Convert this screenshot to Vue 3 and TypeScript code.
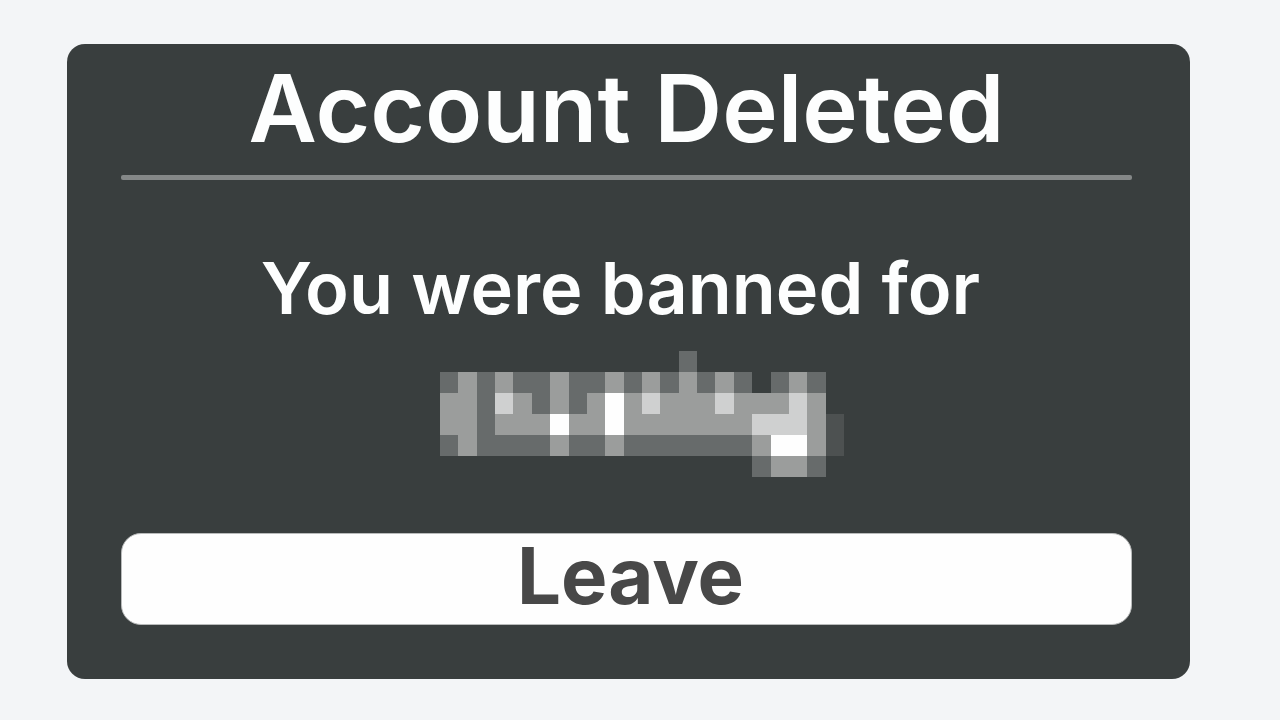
<script setup lang="ts">
const mosaic: string[] = [
  '.............b........',
  'bcbcbbcbbcbcbcbcb.bcb.',
  'ccbdcbcbcwcdcccdcccdc.',
  'ccbcccwccwcccccccdddca',
  'bcbbbbcbbcbbbbbbbcwwca',
  '.................bccb.',
]

const shades: Record<string, string> = {
  a: '#4d5151',
  b: '#676b6b',
  c: '#9b9d9c',
  d: '#cfd0d0',
  w: '#fefefe',
}

const cells = mosaic.flatMap((row, y) =>
  [...row].map((key, x) => ({ key, x, y })).filter((cell) => cell.key !== '.'),
)
</script>

<template>
  <main class="page">
    <section class="dialog" aria-labelledby="dialog-title">
      <h1 id="dialog-title" class="title">Account Deleted</h1>
      <hr class="rule" />
      <p class="message">You were banned for</p>
      <svg class="mosaic" viewBox="0 0 22 6" preserveAspectRatio="none" shape-rendering="crispEdges" aria-hidden="true">
        <rect v-for="c in cells" :key="`${c.x}-${c.y}`" :x="c.x" :y="c.y" width="1" height="1" :fill="shades[c.key]" />
      </svg>
      <button type="button" class="leave">Leave</button>
    </section>
  </main>
</template>

<style>
body {
  margin: 0;
  background: #f3f5f7;
}
</style>

<style scoped>
.page {
  box-sizing: border-box;
  min-height: 100vh;
  padding: 44px 90px 40px 67px;
  font-family: Inter, "Liberation Sans", sans-serif;
}

.dialog {
  display: flex;
  flex-direction: column;
  align-items: center;
  box-sizing: border-box;
  padding: 16px 58px 54px 54px;
  border-radius: 18px;
  background: #393e3e;
  color: #fdfefe;
}

.title {
  margin: 0;
  font-size: 94px;
  line-height: 96px;
  font-weight: 600;
  white-space: nowrap;
}

.rule {
  width: 100%;
  height: 5px;
  margin: 19px 0 0;
  border: 0;
  border-radius: 2px;
  background: #858888;
}

.message {
  margin: 68px 0 0;
  padding-right: 12px;
  font-size: 72px;
  line-height: 80px;
  font-weight: 600;
  white-space: nowrap;
}

.mosaic {
  display: block;
  width: 404px;
  height: 126px;
  margin-top: 23px;
  margin-left: 30px;
}

.leave {
  width: 100%;
  height: 92px;
  margin: 56px 0 0;
  padding: 0 0 6px 8px;
  border: 1px solid #b9bbbb;
  border-radius: 20px;
  background: #fefefe;
  color: #484848;
  font-family: inherit;
  font-size: 78px;
  line-height: 84px;
  font-weight: 700;
  cursor: pointer;
}
</style>
